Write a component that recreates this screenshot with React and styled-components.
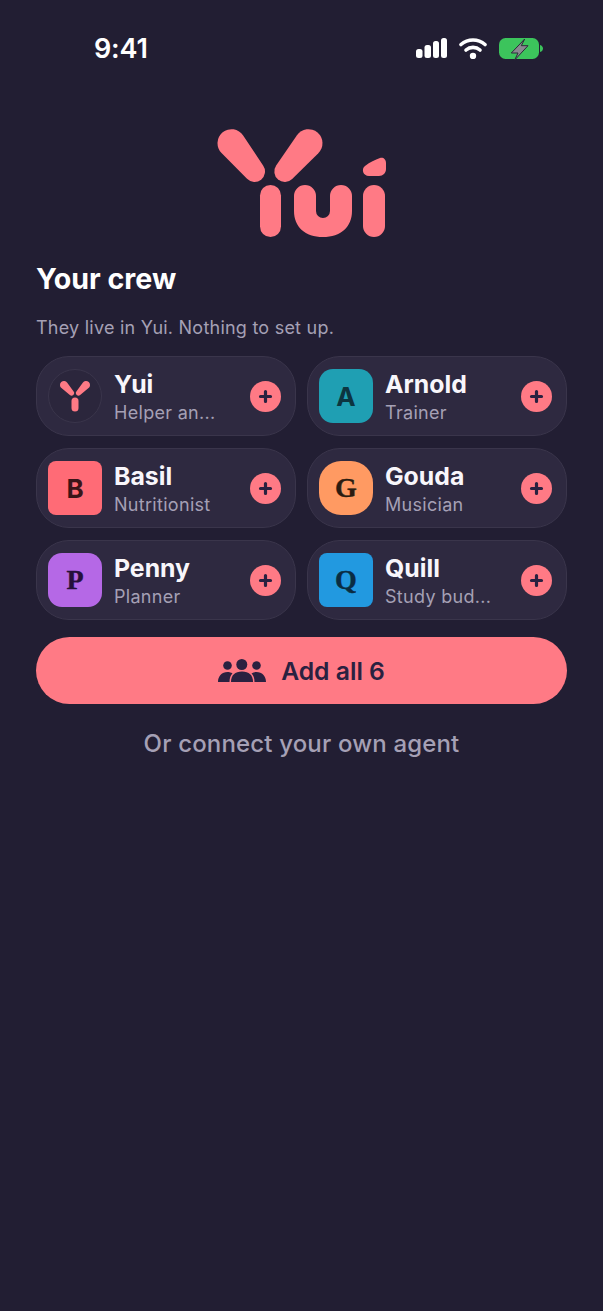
import React from "react";
import styled, { createGlobalStyle } from "styled-components";

const Global = createGlobalStyle`
  html, body { margin: 0; padding: 0; background: #221e33; }
  body { font-family: Inter, "Noto Sans", sans-serif; -webkit-font-smoothing: antialiased; }
`;

const Screen = styled.div`
  width: 603px;
  height: 1311px;
  overflow: hidden;
  background: #221e33;
  color: #fff;
  box-sizing: border-box;
`;

const StatusBar = styled.div`
  height: 97px;
  box-sizing: border-box;
  padding: 33px 60px 0 94px;
  display: flex;
  justify-content: space-between;
  align-items: flex-start;
`;

const Time = styled.div`
  font-size: 27px;
  line-height: 31px;
  font-weight: 600;
  letter-spacing: -0.2px;
`;

const StatusIcons = styled.div`
  display: flex;
  align-items: flex-start;
  gap: 12px;
  padding-top: 5px;
`;

const LogoWrap = styled.div`
  display: flex;
  justify-content: center;
  box-sizing: border-box;
  padding: 18px 3px 0 0;
  height: 165px;
`;

const Content = styled.div`
  padding: 0 36px;
`;

const Title = styled.h1`
  margin: 0;
  font-size: 28.6px;
  line-height: 34px;
  font-weight: 650;
`;

const Subtitle = styled.p`
  margin: 21px 0 0;
  font-size: 18px;
  line-height: 22px;
  letter-spacing: 0.23px;
  color: #a5a0b5;
`;

const Grid = styled.div`
  margin-top: 17px;
  display: grid;
  grid-template-columns: 260px 260px;
  gap: 12px 11px;
`;

const Card = styled.div`
  height: 80px;
  box-sizing: border-box;
  border: 1px solid #3a354b;
  border-radius: 33px;
  background: #2e2940;
  padding: 0 14px 0 11px;
  display: flex;
  align-items: center;
`;

const Avatar = styled.div`
  width: 54px;
  height: 54px;
  flex: none;
  border-radius: ${(p) => p.$radius}px;
  background: ${(p) => p.$bg};
  color: ${(p) => p.$ink};
  font-family: Inter, sans-serif;
  font-weight: 700;
  font-size: 26px;
  display: flex;
  align-items: center;
  justify-content: center;
`;

const SerifAvatar = styled(Avatar)`
  font-family: "Liberation Serif", serif;
  font-weight: 700;
  font-size: 28px;
  -webkit-text-stroke: 0.4px ${(p) => p.$ink};
`;

const RingAvatar = styled(Avatar)`
  box-sizing: border-box;
  border: 1.5px solid #3a354b;
  background: #2b263c;
`;

const Info = styled.div`
  flex: 1;
  min-width: 0;
  margin-left: 12px;
  padding-top: 2px;
`;

const Name = styled.div`
  font-size: 24.8px;
  line-height: 29px;
  font-weight: 650;
  color: #f8f6fb;
`;

const Role = styled.div`
  font-size: 18px;
  line-height: 22px;
  letter-spacing: 0.3px;
  margin-top: 3px;
  color: #a5a0b5;
  white-space: nowrap;
`;

const Plus = styled.div`
  width: 31px;
  height: 31px;
  flex: none;
  border-radius: 50%;
  background: #ff7a85;
  display: flex;
  align-items: center;
  justify-content: center;
`;

const AddAll = styled.button`
  margin-top: 17px;
  width: 531px;
  height: 67px;
  border: 0;
  border-radius: 34px;
  background: #ff7a85;
  color: #2a2140;
  font-family: inherit;
  font-size: 24.7px;
  font-weight: 600;
  display: flex;
  align-items: center;
  justify-content: center;
  gap: 15px;
`;

const Connect = styled.div`
  margin-top: 25px;
  text-align: center;
  font-size: 24px;
  line-height: 30px;
  letter-spacing: 0.16px;
  font-weight: 500;
  color: #a5a0b5;
`;

const crew = [
  { name: "Yui", role: "Helper an...", logo: true },
  { name: "Arnold", role: "Trainer", letter: "A", bg: "#1f9fb3", ink: "#0c3540", radius: 14 },
  { name: "Basil", role: "Nutritionist", letter: "B", bg: "#ff6b76", ink: "#3a1418", radius: 8 },
  { name: "Gouda", role: "Musician", letter: "G", bg: "#ff9a62", ink: "#2b1c10", radius: 22, serif: true },
  { name: "Penny", role: "Planner", letter: "P", bg: "#b568e6", ink: "#26103a", radius: 14, serif: true },
  { name: "Quill", role: "Study bud...", letter: "Q", bg: "#2299e0", ink: "#0a2c42", radius: 8, serif: true },
];

// hull of two circles, for the tapered strokes of the logo
const taper = (x1, y1, r1, x2, y2, r2) => {
  const dx = x2 - x1;
  const dy = y2 - y1;
  const d = Math.hypot(dx, dy);
  const a = Math.atan2(dy, dx);
  const b = Math.acos((r1 - r2) / d);
  const pt = (x, y, r, t) => `${(x + r * Math.cos(t)).toFixed(2)} ${(y + r * Math.sin(t)).toFixed(2)}`;
  return `M${pt(x1, y1, r1, a + b)} A${r1} ${r1} 0 1 1 ${pt(x1, y1, r1, a - b)} L${pt(x2, y2, r2, a - b)} A${r2} ${r2} 0 0 1 ${pt(x2, y2, r2, a + b)} Z`;
};

const Logo = () => (
  <svg width="200" height="135" viewBox="0 0 200 135" fill="#ff7a85">
    <path d={taper(31.5, 28.2, 14, 54.5, 56.5, 10.5)} />
    <path d={taper(108.5, 28.2, 14, 84.8, 56.5, 10.5)} />
    <rect x="60" y="70" width="21" height="52" rx="10.5" />
    <path d="M94 81a11 11 0 0 1 22 0V96a7 7 0 0 0 14 0V81a11 11 0 0 1 22 0V96C152 112 141 122 123 122S94 112 94 96Z" />
    <rect x="163" y="70" width="22" height="52" rx="11" />
    <path d="M165 51C170 47 175 45 180 43C183 42 186 44 186 48V54C186 58 183 61 179 61H169C163 61 161 54 165 51Z" />
  </svg>
);

const MiniLogo = () => (
  <svg width="32" height="36" viewBox="0 0 32 36" fill="#ff7a85">
    <path d={taper(5, 7, 4, 12.5, 15, 2.6)} />
    <path d={taper(27, 7, 4, 19.5, 15, 2.6)} />
    <rect x="12.5" y="19.5" width="7" height="14" rx="3.5" />
  </svg>
);

const PlusIcon = () => (
  <svg width="17" height="17" viewBox="0 0 17 17" fill="none" stroke="#2a2140" strokeWidth="3.2" strokeLinecap="round">
    <path d="M8.5 3.5v10M3.5 8.500h10" />
  </svg>
);

const CrewIcon = () => (
  <svg width="48" height="24" viewBox="0 0 48 24" fill="#2a2140">
    <circle cx="9.5" cy="6.500" r="4.300" />
    <circle cx="23.8" cy="5.500" r="5.500" />
    <circle cx="38.500" cy="6.500" r="4.300" />
    <path d="M0 23C0 17 4 13 9.500 13C11.500 13 13 13.500 14.500 14.500C12.500 16.500 11.500 19 11.500 23Z" />
    <path d="M13 23C13 16 17 12.500 24 12.500C31 12.500 35 16 35 23Z" />
    <path d="M48 23C48 17 44 13 38.500 13C36.500 13 35 13.500 33.500 14.500C35.500 16.500 36.500 19 36.500 23Z" />
  </svg>
);

const Signal = () => (
  <svg width="31" height="20" viewBox="0 0 31 20" fill="#fff">
    <rect x="0" y="11" width="6.500" height="9" rx="2.500" />
    <rect x="8.500" y="7" width="6.500" height="13" rx="2.500" />
    <rect x="17" y="3" width="6" height="17" rx="2.500" />
    <rect x="25" y="0" width="6" height="20" rx="2.500" />
  </svg>
);

const Wifi = () => (
  <svg width="28" height="21" viewBox="0 0 28 21" fill="none" stroke="#fff" strokeWidth="3.600" strokeLinecap="round">
    <path d="M2 6.500C9 .5 19 .5 26 6.500" />
    <path d="M7 12C11 8.500 17 8.500 21 12" />
    <circle cx="14" cy="18" r="1.400" fill="#fff" />
  </svg>
);

const Battery = () => (
  <svg width="44" height="23" viewBox="0 0 44 23">
    <rect x="0" y="0" width="40" height="21" rx="6.500" fill="#3cc45c" />
    <path d="M41 7c2 .5 3 2 3 3.500s-1 3-3 3.500Z" fill="#3cc45c" />
    <path d="M25.700 1L12.300 15H19L15.700 22L29 7.700H22.300Z" fill="#8a8890" stroke="#2a2a38" strokeWidth="1" strokeLinejoin="round" />
  </svg>
);

const CrewAvatar = ({ member }) => {
  if (member.logo) {
    return (
      <RingAvatar $radius={27}>
        <MiniLogo />
      </RingAvatar>
    );
  }
  const Tile = member.serif ? SerifAvatar : Avatar;
  return (
    <Tile $radius={member.radius} $bg={member.bg} $ink={member.ink}>
      {member.letter}
    </Tile>
  );
};

const App = () => (
  <Screen>
    <Global />
    <StatusBar>
      <Time>9:41</Time>
      <StatusIcons>
        <Signal />
        <Wifi />
        <Battery />
      </StatusIcons>
    </StatusBar>
    <LogoWrap>
      <Logo />
    </LogoWrap>
    <Content>
      <Title>Your crew</Title>
      <Subtitle>They live in Yui. Nothing to set up.</Subtitle>
      <Grid>
        {crew.map((c) => (
          <Card key={c.name}>
            <CrewAvatar member={c} />
            <Info>
              <Name>{c.name}</Name>
              <Role>{c.role}</Role>
            </Info>
            <Plus>
              <PlusIcon />
            </Plus>
          </Card>
        ))}
      </Grid>
      <AddAll>
        <CrewIcon />
        Add all 6
      </AddAll>
      <Connect>Or connect your own agent</Connect>
    </Content>
  </Screen>
);

export default App;
